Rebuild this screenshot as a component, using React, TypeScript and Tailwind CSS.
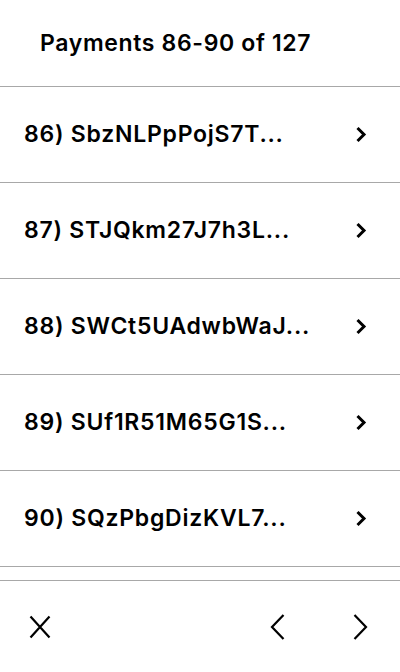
import React from "react";

const payments = [
  { n: 86, id: "SbzNLPpPojS7T..." },
  { n: 87, id: "STJQkm27J7h3L..." },
  { n: 88, id: "SWCt5UAdwbWaJ..." },
  { n: 89, id: "SUf1R51M65G1S..." },
  { n: 90, id: "SQzPbgDizKVL7..." },
];

export default function App() {
  return (
    <div className="w-[400px] h-[672px] bg-white text-black flex flex-col font-['Inter',sans-serif]">
      <div className="h-[87px] flex items-center pl-[40px] border-b border-[#a8a8a8]">
        <span className="text-[23px] font-semibold tracking-[0.65px]">Payments 86-90 of 127</span>
      </div>
      <div className="flex-1 flex flex-col">
        {payments.map((p) => (
          <div key={p.n} className="h-[96px] flex items-center justify-between pl-[24px] pr-[33px] border-b border-[#a8a8a8]">
            <span className="text-[23px] font-semibold tracking-[0.75px]">
              {p.n}) {p.id}
            </span>
            {/* row chevron */}
            <svg width="12" height="17" viewBox="0 0 12 17" fill="none" stroke="currentColor" strokeWidth={3}>
              <path d="M2.5 2l6.5 6.5-6.5 6.5" />
            </svg>
          </div>
        ))}
      </div>
      <div className="h-[92px] flex items-center justify-between border-t border-[#a8a8a8] pl-[29px] pr-[32px]">
        <svg width="22" height="24" viewBox="0 0 22 24" fill="none" stroke="currentColor" strokeWidth={2.2}>
          <path d="M1.5 1.5l19 21M20.5 1.5l-19 21" />
        </svg>
        <div className="flex items-center gap-[68px]">
          <svg width="15" height="26" viewBox="0 0 15 26" fill="none" stroke="currentColor" strokeWidth={2.2}>
            <path d="M13.5 1l-11.5 12 11.5 12" />
          </svg>
          <svg width="15" height="26" viewBox="0 0 15 26" fill="none" stroke="currentColor" strokeWidth={2.2}>
            <path d="M1.5 1l11.5 12-11.5 12" />
          </svg>
        </div>
      </div>
    </div>
  );
}
